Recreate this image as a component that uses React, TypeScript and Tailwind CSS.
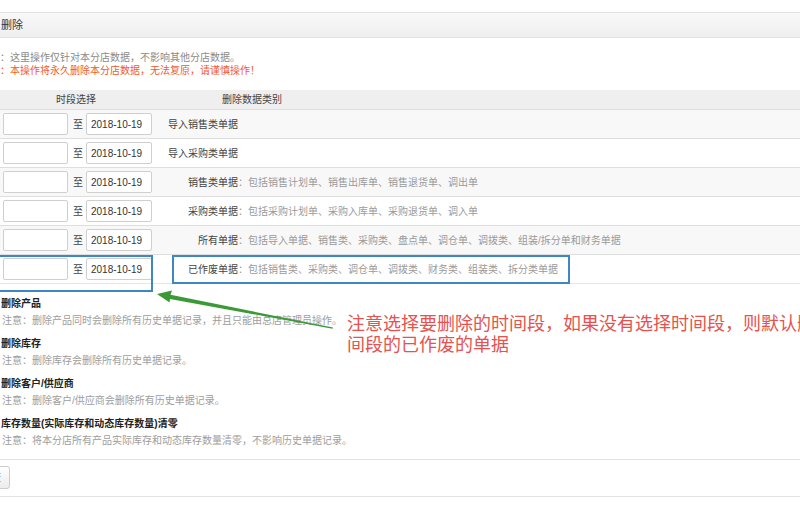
import React from "react";

type Row = { label: string; desc?: string };

const rows: Row[] = [
  { label: "导入销售类单据" },
  { label: "导入采购类单据" },
  { label: "销售类单据", desc: "包括销售计划单、销售出库单、销售退货单、调出单" },
  { label: "采购类单据", desc: "包括采购计划单、采购入库单、采购退货单、调入单" },
  { label: "所有单据", desc: "包括导入单据、销售类、采购类、盘点单、调仓单、调拨类、组装/拆分单和财务单据" },
  { label: "已作废单据", desc: "包括销售类、采购类、调仓单、调拨类、财务类、组装类、拆分类单据" },
];

const sections = [
  { title: "删除产品", note: "注意：删除产品同时会删除所有历史单据记录，并且只能由总店管理员操作。" },
  { title: "删除库存", note: "注意：删除库存会删除所有历史单据记录。" },
  { title: "删除客户/供应商", note: "注意：删除客户/供应商会删除所有历史单据记录。" },
  { title: "库存数量(实际库存和动态库存数量)清零", note: "注意：将本分店所有产品实际库存和动态库存数量清零，不影响历史单据记录。" },
];

export default function App() {
  return (
    <div className="relative w-[800px] h-[506px] overflow-hidden bg-white font-['Liberation_Sans','Noto_Sans_CJK_SC',sans-serif] text-[#333]">
      <div className="h-[12px]" />
      {/* panel header */}
      <div className="h-[26px] border-y border-[#e2e2e2] bg-gradient-to-b from-[#f8f8f8] to-[#efefef] flex items-center text-[11px] text-[#333] pl-[1px]">
        删除
      </div>

      {/* messages */}
      <div className="pt-[13px] text-[10px] leading-[13px]">
        <div className="text-[#8a8a8a]">：这里操作仅针对本分店数据，不影响其他分店数据。</div>
        <div className="text-[#ef5a2e]">：本操作将永久删除本分店数据，无法复原，请谨慎操作！</div>
      </div>

      {/* table */}
      <div className="mt-[13px] text-[10px]">
        <div className="h-[19px] bg-[#efefef] flex items-center text-[#444]">
          <div className="w-[152px] text-center">时段选择</div>
          <div className="pl-[70px]">删除数据类别</div>
        </div>
        {rows.map((r, i) => (
          <div
            key={i}
            className={`h-[29px] flex items-center border-t border-[#dedede] ${i % 2 === 0 ? "bg-[#f8f8f8]" : "bg-white"}`}
          >
            <div className="w-[158px] flex items-center">
              <div className="ml-[3px] w-[65px] h-[22px] border border-[#cfcfcf] rounded-[2px] bg-white" />
              <span className="ml-[5px] w-[13px] text-[#444]">至</span>
              <div className="w-[66px] h-[22px] border border-[#cfcfcf] rounded-[2px] bg-white flex items-center pl-[4px] text-[#333]">
                2018-10-19
              </div>
            </div>
            <div className="w-[80px] text-right text-[#444] whitespace-nowrap">{r.label}</div>
            {r.desc && (
              <div className="whitespace-nowrap text-[#9a9a9a]">
                <span>：</span>
                {r.desc}
              </div>
            )}
          </div>
        ))}
        <div className="border-t border-[#e6e6e6]" />
      </div>

      {/* sections */}
      <div className="pt-[13px] pl-[2px] text-[10px]">
        {sections.map((s, i) => (
          <div key={i} className={i === 0 ? "" : "mt-[8px]"}>
            <div className="h-[14px] leading-[14px] font-bold text-[#222] ml-[-1px]">{s.title}</div>
            <div className="h-[16px] leading-[16px] mt-[2px] text-[#9d9d9d]">{s.note}</div>
          </div>
        ))}
      </div>

      <div className="mt-[10px] border-t border-[#e3e3e3]" />
      <div className="pt-[6px] pb-[7px]">
        <button className="ml-[-22px] w-[32px] h-[23px] border border-[#cccccc] rounded-[3px] bg-gradient-to-b from-white to-[#ececec] text-[10px] text-[#555] flex items-center justify-start pl-[2px]">
          提交
        </button>
      </div>
      <div className="border-t border-[#e3e3e3]" />

      {/* annotation boxes */}
      <div className="absolute left-[-5px] top-[255px] w-[158px] h-[37px] border-2 border-[#3f87c2]" />
      <div className="absolute left-[172px] top-[255px] w-[398px] h-[29px] border-2 border-[#3f87c2]" />

      {/* arrow */}
      <svg className="absolute left-0 top-0 pointer-events-none" width="800" height="506" viewBox="0 0 800 506">
        <polygon points="157,294 172,290.5 170.5,294.8 333,327.6 332.6,328.8 170,298.9 169.6,302.6" fill="#3b9a36" />
      </svg>

      {/* annotation text */}
      <div className="absolute left-[347px] top-[314px] text-[18px] leading-[21px] text-[#e5524f] whitespace-nowrap">
        <div>注意选择要删除的时间段，如果没有选择时间段，则默认删除所有时</div>
        <div>间段的已作废的单据</div>
      </div>
    </div>
  );
}
